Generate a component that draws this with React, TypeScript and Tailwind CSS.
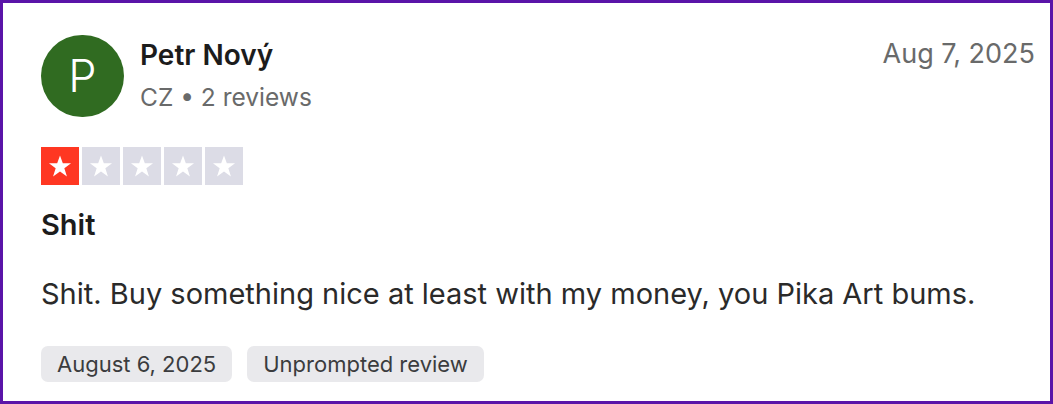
import React from "react";

const Star = ({ filled }: { filled: boolean }) => (
  <div className={`flex h-[38px] w-[38px] items-center justify-center ${filled ? "bg-[#ff3722]" : "bg-[#dcdce6]"}`}>
    <svg width="26" height="26" viewBox="0 0 24 24">
      <path d="M12 2.2l2.6 7.3h7.6l-6.2 4.6 2.4 7.5L12 17l-6.4 4.6 2.4-7.5L1.8 9.5h7.6z" fill="#ffffff" />
    </svg>
  </div>
);

export default function App() {
  const font = { fontFamily: "Inter, 'Noto Sans', sans-serif" };
  return (
    <div className="h-[404px] w-[1053px] border-[3px] border-[#5a14a8] bg-white pl-[38px] pr-[15px] pt-[32px]" style={font}>
      <div className="flex items-start justify-between">
        <div className="flex items-start gap-[16px]">
          <div className="flex h-[82px] w-[83px] items-center justify-center rounded-full bg-[#306b21] text-[45px] font-light text-white">
            P
          </div>
          <div className="mt-[3px] flex flex-col">
            <div className="text-[28px] font-semibold leading-[34px] text-[#1c1c1c]">Petr Nový</div>
            <div className="mt-[10px] text-[24.5px] leading-[30px] text-[#696a6a]">CZ • 2 reviews</div>
          </div>
        </div>
        <div className="pt-[2px] text-[27px] leading-[34px] text-[#696a6a]">Aug 7, 2025</div>
      </div>
      <div className="mt-[30px] flex gap-[3px]">
        <Star filled />
        <Star filled={false} />
        <Star filled={false} />
        <Star filled={false} />
        <Star filled={false} />
      </div>
      <div className="mt-[22px] text-[29px] font-semibold leading-[36px] text-[#1c1c1c]">Shit</div>
      <div className="mt-[33px] text-[29px] leading-[36px] text-[#2a2a2a]">
        Shit. Buy something nice at least with my money, you Pika Art bums.
      </div>
      <div className="mt-[34px] flex gap-[15px]">
        <div className="flex h-[36px] items-center rounded-[7px] bg-[#e9e9ec] px-[16px] text-[22px] text-[#3b3c3e]">
          August 6, 2025
        </div>
        <div className="flex h-[36px] items-center rounded-[7px] bg-[#e9e9ec] px-[16px] text-[22px] text-[#3b3c3e]">
          Unprompted review
        </div>
      </div>
    </div>
  );
}
